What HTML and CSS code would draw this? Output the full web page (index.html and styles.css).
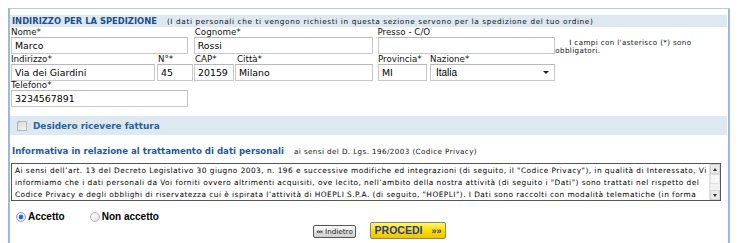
FILE: index.html
```html
<!DOCTYPE html>
<html lang="it">
<head>
<meta charset="utf-8">
<title>Indirizzo per la spedizione</title>
<link rel="stylesheet" href="styles.css">
</head>
<body>
<div class="frame">
  <div class="head">
    <span class="title">INDIRIZZO PER LA SPEDIZIONE</span>
    <span class="sub">(I dati personali che ti vengono richiesti in questa sezione servono per la spedizione del tuo ordine)</span>
  </div>

  <div class="row">
    <div class="field f-nome"><div class="lbl">Nome*</div><div class="inp">Marco</div></div>
    <div class="field f-cogn"><div class="lbl">Cognome*</div><div class="inp">Rossi</div></div>
    <div class="field f-presso"><div class="lbl">Presso - C/O</div><div class="inp"></div></div>
    <div class="note">I campi con l'asterisco (*) sono<br>obbligatori.</div>
  </div>

  <div class="row">
    <div class="field f-ind"><div class="lbl">Indirizzo*</div><div class="inp">Via dei Giardini</div></div>
    <div class="field f-num"><div class="lbl">N°*</div><div class="inp">45</div></div>
    <div class="field f-cap"><div class="lbl">CAP*</div><div class="inp">20159</div></div>
    <div class="field f-citta"><div class="lbl">Città*</div><div class="inp">Milano</div></div>
    <div class="field f-prov"><div class="lbl">Provincia*</div><div class="inp">MI</div></div>
    <div class="field f-naz"><div class="lbl">Nazione*</div><div class="sel"><span>Italia</span><span class="caret"></span></div></div>
  </div>

  <div class="row">
    <div class="field f-nome"><div class="lbl">Telefono*</div><div class="inp">3234567891</div></div>
  </div>

  <div class="band">
    <span class="chk"></span>
    <span class="band-txt">Desidero ricevere fattura</span>
  </div>

  <div class="info-head">
    <span class="info-title">Informativa in relazione al trattamento di dati personali</span>
    <span class="info-sub">ai sensi del D. Lgs. 196/2003 (Codice Privacy)</span>
  </div>

  <div class="tarea">
    <div class="ttext">Ai sensi dell’art. 13 del Decreto Legislativo 30 giugno 2003, n. 196 e successive modifiche ed integrazioni (di seguito, il "Codice Privacy"), in qualità di Interessato, Vi<br>informiamo che i dati personali da Voi forniti ovvero altrimenti acquisiti, ove lecito, nell’ambito della nostra attività (di seguito i "Dati") sono trattati nel rispetto del<br>Codice Privacy e degli obblighi di riservatezza cui è ispirata l’attività di HOEPLI S.P.A. (di seguito, "HOEPLI"). I Dati sono raccolti con modalità telematiche (in forma</div>
    <div class="sbar">
      <div class="sbtn"><span class="arr-up"></span></div>
      <div class="sthumb"></div>
      <div class="strack"></div>
      <div class="sbtn"><span class="arr-dn"></span></div>
    </div>
  </div>

  <div class="radios">
    <span class="radio on"></span><span class="rlbl">Accetto</span>
    <span class="radio"></span><span class="rlbl">Non accetto</span>
  </div>

  <div class="buttons">
    <span class="btn-back"><span class="bchev">‹‹‹</span>Indietro</span>
    <span class="btn-go">PROCEDI <span class="chev">»»</span></span>
  </div>
</div>
</body>
</html>
```

FILE: styles.css
```css
* { box-sizing: border-box; }

body {
  margin: 8px;
  background: #fff;
  color: #000;
  font-family: "DejaVu Sans", Verdana, sans-serif;
}

.frame {
  width: 722px;
  height: 235px;
  overflow: hidden;
  border-top: 1px solid #b7cbe0;
  border-left: 2px solid #9cb9dc;
  border-right: 2px solid #9cb9dc;
  padding: 6px 1px 0 0;
}

.head {
  height: 12px;
  background: #dde8f1;
  display: flex;
  align-items: baseline;
  padding-left: 2px;
  line-height: 12px;
  white-space: nowrap;
}
.title {
  font-weight: bold;
  font-size: 8.4px;
  color: #1d4f8c;
}
.sub {
  font-size: 7.3px;
  letter-spacing: 0.62px;
  margin-left: 10px;
  color: #111;
}

.row {
  display: flex;
  padding-left: 1px;
}
.head + .row { margin-top: 1px; }

.field { display: flex; flex-direction: column; }
.lbl {
  height: 9px;
  line-height: 9px;
  font-size: 8.7px;
  color: #111;
  white-space: nowrap;
}
.inp, .sel {
  height: 17px;
  border: 1px solid #c8c8c8;
  border-top-color: #b8b8b8;
  background: #fff;
  font-size: 9.4px;
  line-height: 15px;
  padding: 0 3px;
  white-space: nowrap;
  overflow: hidden;
}
.f-nome { width: 177px; margin-right: 6px; }
.f-cogn { width: 179px; margin-right: 5px; }
.f-presso { width: 178px; }
.f-ind { width: 144px; margin-right: 2px; }
.f-num { width: 36px; margin-right: 1px; }
.f-cap { width: 40px; margin-right: 1px; }
.f-citta { width: 138px; margin-right: 5px; }
.f-prov { width: 49px; margin-right: 3px; }
.f-naz { width: 125px; }
.f-num .lbl { padding-left: 1px; }
.f-cap .lbl, .f-cogn .lbl { padding-left: 1px; }
.f-citta .lbl { padding-left: 2px; }

.sel {
  display: flex;
  justify-content: space-between;
  align-items: center;
  font-family: "Liberation Sans", Arial, sans-serif;
  font-size: 10px;
  padding: 0 5px;
}
.caret {
  width: 0; height: 0;
  border-left: 3px solid transparent;
  border-right: 3px solid transparent;
  border-top: 3px solid #222;
}

.note {
  width: 172px;
  font-size: 7.2px;
  letter-spacing: 0.35px;
  line-height: 8px;
  text-indent: 14px;
  margin-top: 11px;
  color: #111;
  white-space: nowrap;
}

.band {
  margin-top: 9px;
  height: 19px;
  background: #dde8f1;
  display: flex;
  align-items: center;
  padding-left: 7px;
}
.chk {
  width: 10px; height: 10px;
  border: 1px solid #b5b5b5;
  background: linear-gradient(135deg, #d8d8d8, #f4f4f4);
  margin-right: 6px;
}
.band-txt {
  font-weight: bold;
  font-size: 8.9px;
  color: #2563a6;
}

.info-head {
  margin-top: 10px;
  height: 12px;
  line-height: 12px;
  padding-left: 2px;
  display: flex;
  align-items: baseline;
  white-space: nowrap;
}
.info-title {
  font-weight: bold;
  font-size: 8.6px;
  color: #1f5a9c;
}
.info-sub {
  font-size: 7.2px;
  letter-spacing: 0.4px;
  margin-left: 10px;
  color: #111;
}

.tarea {
  margin: 6px 0 0 1px;
  width: 710px;
  height: 38px;
  border: 1px solid #555;
  display: flex;
}
.ttext {
  flex: 1;
  overflow: hidden;
  font-size: 7.4px;
  letter-spacing: 0.46px;
  line-height: 12px;
  padding: 1px 0 0 3px;
  white-space: nowrap;
  color: #000;
}
.sbar {
  width: 11px;
  display: flex;
  flex-direction: column;
  background: #f0f0f0;
  border-left: 1px solid #e2e2e2;
}
.sbtn {
  height: 10px;
  background: #eaeaea;
  border: 1px solid #d4d4d4;
  display: flex;
  align-items: center;
  justify-content: center;
}
.arr-up, .arr-dn {
  width: 0; height: 0;
  border-left: 2.5px solid transparent;
  border-right: 2.5px solid transparent;
}
.arr-up { border-bottom: 3px solid #333; }
.arr-dn { border-top: 3px solid #333; }
.sthumb {
  height: 10px;
  background: #f7f7f7;
  border: 1px solid #e0e0e0;
}
.strack { flex: 1; background: #f0f0f0; }

.radios {
  margin-top: 10px;
  height: 11px;
  display: flex;
  align-items: center;
  padding-left: 6px;
  font-family: "Liberation Sans", Arial, sans-serif;
  font-weight: bold;
  font-size: 10px;
}
.radio {
  width: 10px; height: 10px;
  border-radius: 50%;
  border: 1px solid #b9b9b9;
  background: radial-gradient(circle at 40% 40%, #ffffff, #dcdcdc);
  margin-right: 2px;
}
.radio.on {
  border-color: #8e9fb5;
  background: radial-gradient(circle, #2f66c4 0, #2f66c4 2px, #dfe8f4 2.6px, #f4f4f4 5px);
}
.rlbl { margin-right: 25px; }

.buttons {
  height: 17px;
  display: flex;
  align-items: center;
  padding-left: 303px;
}
.btn-back {
  width: 43px;
  height: 13px;
  border: 1px solid #555;
  border-radius: 2px;
  background: linear-gradient(#fbfbfb, #cfcfcf);
  font-size: 7.2px;
  line-height: 11px;
  text-align: center;
  color: #222;
  white-space: nowrap;
  margin-top: 2px;
}
.bchev { letter-spacing: -1px; margin-right: 3px; font-weight: bold; }
.btn-go {
  margin-left: 14px;
  width: 76px;
  height: 17px;
  border: 1px solid #8a8a6a;
  border-radius: 2px;
  background: linear-gradient(#fff27a 0, #ffe100 45%, #f2c200 100%);
  font-family: "Liberation Sans", Arial, sans-serif;
  font-weight: bold;
  font-size: 10.5px;
  line-height: 15px;
  color: #1f3b9c;
  text-align: center;
  white-space: nowrap;
}
.chev { font-size: 9px; margin-left: 6px; }
```
